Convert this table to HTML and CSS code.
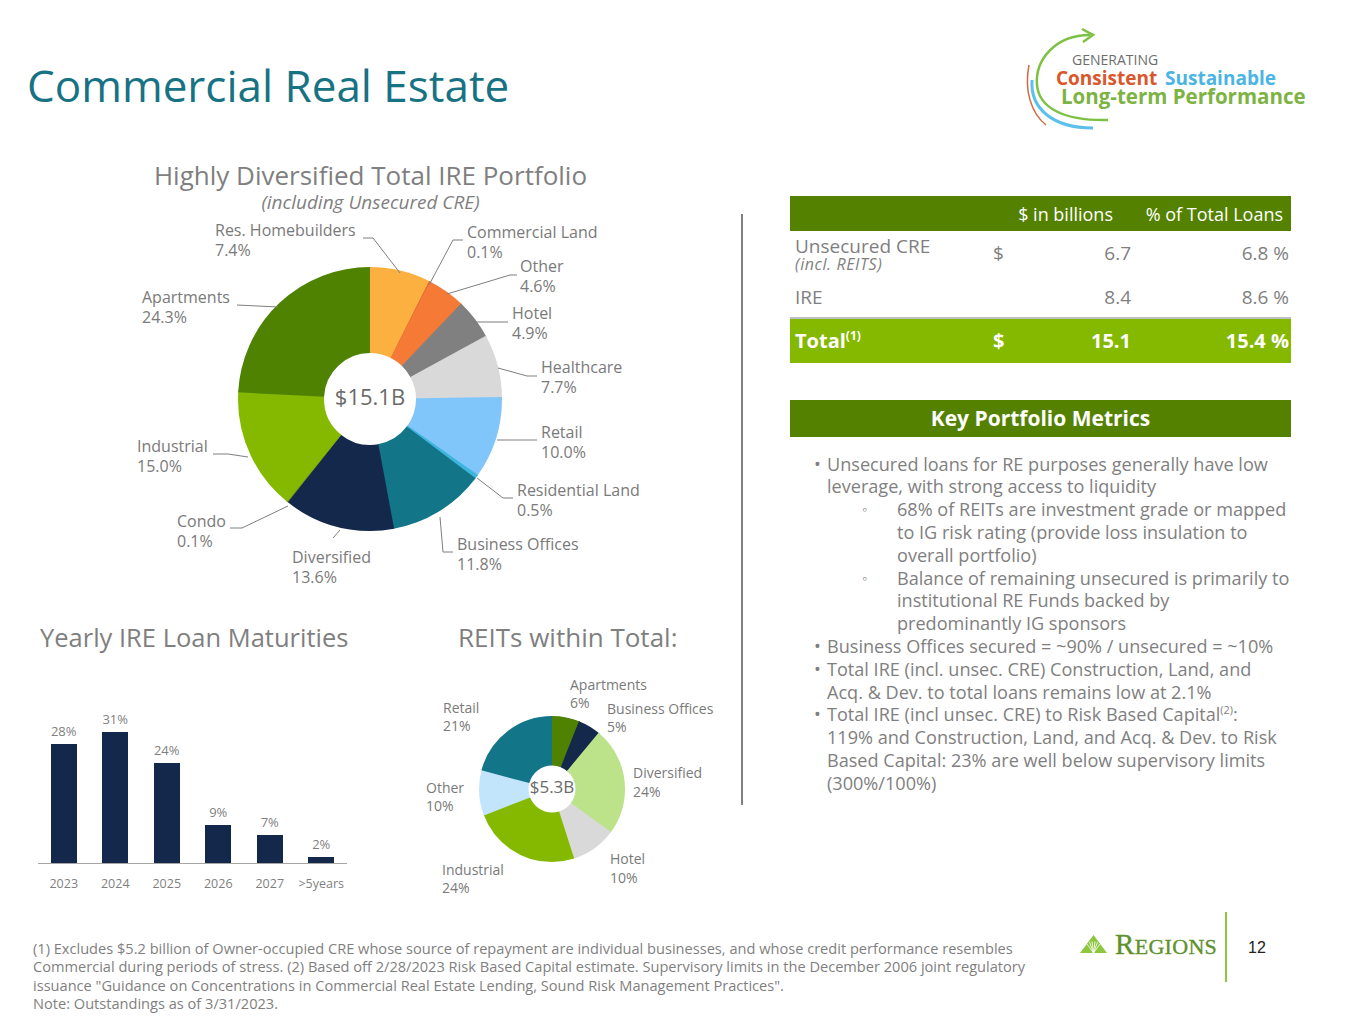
FILE: index.html
```html
<!DOCTYPE html>
<html lang="en">
<head>
<meta charset="utf-8">
<title>Commercial Real Estate</title>
<link rel="stylesheet" href="styles.css">
</head>
<body>
<div class="slide">
  <header class="top">
    <h1 class="title">Commercial Real Estate</h1>
    <svg class="brand" width="310" height="115" viewBox="1010 20 310 115">
      <path d="M1090,35 C1055,35 1035,60 1037,85 C1039,108 1064,121 1108,120" stroke="#7cc142" stroke-width="2.5" fill="none"/>
      <polyline points="1082,29 1093,35 1083,42" stroke="#7cc142" stroke-width="2.5" fill="none"/>
      <path d="M1029,65 C1024,90 1031,113 1046,125" stroke="#d2693f" stroke-width="1.5" fill="none"/>
      <path d="M1032,80 C1030,108 1052,128 1093,128" stroke="#5bc0eb" stroke-width="3" fill="none"/>
      <text class="b-gen" x="1072" y="65">GENERATING</text>
      <text class="b-big b-orange" x="1056" y="85">Consistent</text>
      <text class="b-big b-blue" x="1165" y="85">Sustainable</text>
      <text class="b-long b-green" x="1061" y="104">Long-term Performance</text>
    </svg>
  </header>

  <main class="main">
    <section class="leftcol">
      <div class="portfolio">
        <h2 class="chart-title">Highly Diversified Total IRE Portfolio</h2>
        <div class="chart-sub">(including Unsecured CRE)</div>
        <svg class="pie" width="741" height="386" viewBox="0 214 741 386">
          <g transform="rotate(-90 370 399)" fill="none" stroke-width="86">
            <circle cx="370" cy="399" r="89" stroke="#fbb040" stroke-dasharray="42.4 600" stroke-dashoffset="0"/>
            <circle cx="370" cy="399" r="89" stroke="#e2603a" stroke-dasharray="1.56 600" stroke-dashoffset="-41.38"/>
            <circle cx="370" cy="399" r="89" stroke="#f47a36" stroke-dasharray="26.7 600" stroke-dashoffset="-41.94"/>
            <circle cx="370" cy="399" r="89" stroke="#808080" stroke-dasharray="28.4 600" stroke-dashoffset="-67.66"/>
            <circle cx="370" cy="399" r="89" stroke="#d9d9d9" stroke-dasharray="44.1 600" stroke-dashoffset="-95.06"/>
            <circle cx="370" cy="399" r="89" stroke="#80c6fb" stroke-dasharray="56.9 600" stroke-dashoffset="-138.12"/>
            <circle cx="370" cy="399" r="89" stroke="#3fb4dd" stroke-dasharray="3.8 600" stroke-dashoffset="-194.04"/>
            <circle cx="370" cy="399" r="89" stroke="#127588" stroke-dasharray="67.0 600" stroke-dashoffset="-196.84"/>
            <circle cx="370" cy="399" r="89" stroke="#14284b" stroke-dasharray="77.1 600" stroke-dashoffset="-262.82"/>
            <circle cx="370" cy="399" r="89" stroke="#6a8c2a" stroke-dasharray="1.56 600" stroke-dashoffset="-338.88"/>
            <circle cx="370" cy="399" r="89" stroke="#85b900" stroke-dasharray="84.9 600" stroke-dashoffset="-339.43"/>
            <circle cx="370" cy="399" r="89" stroke="#4f8200" stroke-dasharray="135.89 600" stroke-dashoffset="-423.31"/>
          </g>
          <text class="pie-center" x="370" y="405">$15.1B</text>
          <g class="leaders" fill="none" stroke="#7f7f7f" stroke-width="1">
            <polyline points="363,238 373,238 400,273"/>
            <polyline points="463,240 453,240 429,285"/>
            <polyline points="517,275 510,275 447,294"/>
            <polyline points="508,322 473,322"/>
            <polyline points="537,376 527,376 498,368"/>
            <polyline points="537,440 497,440"/>
            <polyline points="513,498 503,498 477,478"/>
            <polyline points="453,552 443,552 440,517"/>
            <polyline points="333,538 340,530"/>
            <polyline points="230,528 242,528 288,506"/>
            <polyline points="213,454 228,454 248,457"/>
            <polyline points="237,305 278,307"/>
          </g>
          <g class="lbl">
            <text x="215" y="236">Res. Homebuilders</text><text x="215" y="256">7.4%</text>
            <text x="467" y="238">Commercial Land</text><text x="467" y="258">0.1%</text>
            <text x="520" y="272">Other</text><text x="520" y="292">4.6%</text>
            <text x="512" y="319">Hotel</text><text x="512" y="339">4.9%</text>
            <text x="541" y="373">Healthcare</text><text x="541" y="393">7.7%</text>
            <text x="541" y="438">Retail</text><text x="541" y="458">10.0%</text>
            <text x="517" y="496">Residential Land</text><text x="517" y="516">0.5%</text>
            <text x="457" y="550">Business Offices</text><text x="457" y="570">11.8%</text>
            <text x="292" y="563">Diversified</text><text x="292" y="583">13.6%</text>
            <text x="177" y="527">Condo</text><text x="177" y="547">0.1%</text>
            <text x="137" y="452">Industrial</text><text x="137" y="472">15.0%</text>
            <text x="142" y="303">Apartments</text><text x="142" y="323">24.3%</text>
          </g>
        </svg>
      </div>

      <div class="lower">
        <div class="maturities">
          <h2 class="sec-title">Yearly IRE Loan Maturities</h2>
          <div class="bars">
            <div class="bar-col"><span class="bar-val">28%</span><div class="bar" style="height:119px"></div></div>
            <div class="bar-col"><span class="bar-val">31%</span><div class="bar" style="height:131px"></div></div>
            <div class="bar-col"><span class="bar-val">24%</span><div class="bar" style="height:100px"></div></div>
            <div class="bar-col"><span class="bar-val">9%</span><div class="bar" style="height:38px"></div></div>
            <div class="bar-col"><span class="bar-val">7%</span><div class="bar" style="height:28px"></div></div>
            <div class="bar-col"><span class="bar-val">2%</span><div class="bar" style="height:6px"></div></div>
          </div>
          <div class="years">
            <span>2023</span><span>2024</span><span>2025</span><span>2026</span><span>2027</span><span>&gt;5years</span>
          </div>
        </div>

        <div class="reits">
          <h2 class="sec-title">REITs within Total:</h2>
          <svg class="reit-pie" width="341" height="253" viewBox="400 652 341 253">
            <g transform="rotate(-90 552 789)" fill="none" stroke-width="49.5">
              <circle cx="552" cy="789" r="48.25" stroke="#4f8200" stroke-dasharray="19 400" stroke-dashoffset="0"/>
              <circle cx="552" cy="789" r="48.25" stroke="#14284b" stroke-dasharray="15.96 400" stroke-dashoffset="-18.19"/>
              <circle cx="552" cy="789" r="48.25" stroke="#bce28a" stroke-dasharray="73.56 400" stroke-dashoffset="-33.35"/>
              <circle cx="552" cy="789" r="48.25" stroke="#d9d9d9" stroke-dasharray="31.12 400" stroke-dashoffset="-106.11"/>
              <circle cx="552" cy="789" r="48.25" stroke="#85b900" stroke-dasharray="73.56 400" stroke-dashoffset="-136.42"/>
              <circle cx="552" cy="789" r="48.25" stroke="#c3e5fb" stroke-dasharray="31.12 400" stroke-dashoffset="-209.18"/>
              <circle cx="552" cy="789" r="48.25" stroke="#127588" stroke-dasharray="63.66 400" stroke-dashoffset="-239.50"/>
            </g>
            <text class="reit-center" x="552" y="793">$5.3B</text>
            <g class="lbl-s">
              <text x="570" y="690">Apartments</text><text x="570" y="708">6%</text>
              <text x="607" y="714">Business Offices</text><text x="607" y="732">5%</text>
              <text x="443" y="713">Retail</text><text x="443" y="731">21%</text>
              <text x="633" y="778">Diversified</text><text x="633" y="797">24%</text>
              <text x="426" y="793">Other</text><text x="426" y="811">10%</text>
              <text x="610" y="864">Hotel</text><text x="610" y="883">10%</text>
              <text x="442" y="875">Industrial</text><text x="442" y="893">24%</text>
            </g>
          </svg>
        </div>
      </div>
    </section>

    <div class="divider"></div>

    <section class="rightcol">
      <div class="trow thead">
        <span class="h-b">$ in billions</span>
        <span class="h-p">% of Total Loans</span>
      </div>
      <div class="trow r1">
        <div class="lab"><div class="lab-main">Unsecured CRE</div><div class="lab-note">(incl. REITS)</div></div>
        <div class="cur">$</div>
        <div class="val">6.7</div>
        <div class="pct">6.8 %</div>
      </div>
      <div class="trow r2">
        <div class="lab">IRE</div>
        <div class="cur"></div>
        <div class="val">8.4</div>
        <div class="pct">8.6 %</div>
      </div>
      <div class="trow total">
        <div class="lab">Total<sup>(1)</sup></div>
        <div class="cur">$</div>
        <div class="val">15.1</div>
        <div class="pct">15.4 %</div>
      </div>

      <div class="kpm">Key Portfolio Metrics</div>

      <div class="bullets">
        <div class="bl"><span class="dot">•</span><p>Unsecured loans for RE purposes generally have low<br>leverage, with strong access to liquidity</p></div>
        <div class="bl sub"><span class="dot">◦</span><p>68% of REITs are investment grade or mapped<br>to IG risk rating (provide loss insulation to<br>overall portfolio)</p></div>
        <div class="bl sub"><span class="dot">◦</span><p>Balance of remaining unsecured is primarily to<br>institutional RE Funds backed by<br>predominantly IG sponsors</p></div>
        <div class="bl"><span class="dot">•</span><p>Business Offices secured = ~90% / unsecured = ~10%</p></div>
        <div class="bl"><span class="dot">•</span><p>Total IRE (incl. unsec. CRE) Construction, Land, and<br>Acq. &amp; Dev. to total loans remains low at 2.1%</p></div>
        <div class="bl"><span class="dot">•</span><p>Total IRE (incl unsec. CRE) to Risk Based Capital<sup>(2)</sup>:<br>119% and Construction, Land, and Acq. &amp; Dev. to Risk<br>Based Capital: 23% are well below supervisory limits<br>(300%/100%)</p></div>
      </div>
    </section>
  </main>

  <footer class="foot">
    <div class="note">(1) Excludes $5.2 billion of Owner-occupied CRE whose source of repayment are individual businesses, and whose credit performance resembles<br>Commercial during periods of stress. (2) Based off 2/28/2023 Risk Based Capital estimate. Supervisory limits in the December 2006 joint regulatory<br>issuance "Guidance on Concentrations in Commercial Real Estate Lending, Sound Risk Management Practices".<br>Note: Outstandings as of 3/31/2023.</div>
    <svg class="regions" width="140" height="40" viewBox="0 0 140 40">
      <polygon points="0,27 13.5,9 27,27" fill="#8dc63f"/>
      <g stroke="#ffffff" stroke-width="0.8">
        <line x1="13.5" y1="27" x2="7" y2="18"/>
        <line x1="13.5" y1="27" x2="9.5" y2="16"/>
        <line x1="13.5" y1="27" x2="12" y2="15.5"/>
        <line x1="13.5" y1="27" x2="15" y2="15.5"/>
        <line x1="13.5" y1="27" x2="17.5" y2="16"/>
        <line x1="13.5" y1="27" x2="20" y2="18"/>
      </g>
      <text class="reg-text" x="35" y="28"><tspan class="reg-cap">R</tspan><tspan class="reg-sc">EGIONS</tspan></text>
    </svg>
    <div class="vline"></div>
    <div class="pnum">12</div>
  </footer>
</div>
</body>
</html>
```

FILE: styles.css
```css
* { box-sizing: border-box; }
html, body { margin: 0; padding: 0; background: #ffffff; }
body { font-family: "Open Sans", "Noto Sans", sans-serif; color: #7f7f7f; }

.slide { width: 1365px; height: 1024px; overflow: hidden; display: flex; flex-direction: column; }

/* header */
.top { height: 150px; flex: none; display: flex; justify-content: space-between; align-items: flex-start; }
.title { margin: 63px 0 0 27px; font-size: 44px; line-height: 44px; font-weight: 400; color: #177383; white-space: nowrap; }
.brand { margin: 20px 45px 0 0; flex: none; display: block; }
.brand text { font-family: "Open Sans", sans-serif; }
.b-gen { font-size: 14px; fill: #6d6d6d; }
.b-big { font-size: 19px; font-weight: 700; }
.b-long { font-size: 20.5px; font-weight: 700; }
.b-orange { fill: #d9572b; }
.b-blue { fill: #4ab5e3; }
.b-green { fill: #7cb342; }

/* main */
.main { height: 755px; flex: none; display: flex; }
.leftcol { width: 741px; flex: none; display: flex; flex-direction: column; }

.portfolio { height: 460px; flex: none; padding-top: 10px; display: flex; flex-direction: column; align-items: center; }
.chart-title { margin: 0; font-size: 26px; line-height: 30px; font-weight: 400; color: #7f7f7f; white-space: nowrap; }
.chart-sub { font-size: 19px; line-height: 24px; font-style: italic; color: #7f7f7f; }
.pie { display: block; flex: none; }
.pie text, .reit-pie text { font-family: "Open Sans", sans-serif; }
.lbl text { font-size: 16px; fill: #7a7a7a; }
.pie-center { font-size: 22px; fill: #6a6a6a; text-anchor: middle; }

.lower { height: 295px; flex: none; display: flex; }
.sec-title { margin: 12px 0 0; font-size: 25.5px; line-height: 30px; font-weight: 400; color: #7f7f7f; white-space: nowrap; }

.maturities { width: 400px; flex: none; }
.maturities .sec-title { padding-left: 40px; }
.bars { margin-left: 38px; width: 309px; height: 211.5px; display: flex; align-items: flex-end; border-bottom: 1.5px solid #a6a6a6; }
.bar-col { width: 51.5px; flex: none; display: flex; flex-direction: column; align-items: center; }
.bar-val { font-size: 13px; line-height: 16px; margin-bottom: 5px; color: #7f7f7f; }
.bar { width: 26px; background: #14284b; }
.years { margin-left: 38px; width: 309px; display: flex; margin-top: 12px; }
.years span { width: 51.5px; flex: none; text-align: center; font-size: 12.5px; line-height: 16px; color: #7f7f7f; }

.reits { width: 341px; flex: none; }
.reits .sec-title { padding-left: 58px; font-size: 26px; }
.reit-pie { display: block; }
.lbl-s text { font-size: 14px; fill: #7a7a7a; }
.reit-center { font-size: 17px; fill: #6a6a6a; text-anchor: middle; }

.divider { width: 2px; height: 591px; margin-top: 64px; background: #808080; flex: none; }

/* right column */
.rightcol { width: 501px; margin-left: 47px; padding-top: 46px; flex: none; }
.trow { display: grid; grid-template-columns: 200px 30px 120px 151px; }
.thead { height: 35px; background: #548200; color: #ffffff; font-size: 18px; align-items: center; }
.h-b { grid-column: 2 / 4; text-align: right; padding-right: 27px; }
.h-p { text-align: right; padding-right: 8px; }
.r1, .r2 { font-size: 19px; line-height: 20px; color: #7f7f7f; }
.r1 { height: 50px; }
.r1 .lab { padding-top: 5px; }
.r1 .cur, .r1 .val, .r1 .pct { padding-top: 12px; }
.r2 { height: 38px; border-bottom: 2px solid #bfbfbf; }
.r2 > div { padding-top: 6px; }
.lab { padding-left: 5px; white-space: nowrap; }
.lab-note { font-size: 16px; line-height: 17px; font-style: italic; letter-spacing: 0.6px; }
.cur { padding-left: 3px; }
.val { text-align: right; padding-right: 9px; }
.pct { text-align: right; padding-right: 2px; }
.total { height: 44px; background: #84b900; color: #ffffff; font-weight: 700; font-size: 20px; line-height: 24px; align-items: center; }
.total sup, .bl sup { font-size: 0.6em; line-height: 0; vertical-align: super; }

.kpm { margin-top: 37px; height: 37px; background: #548200; color: #ffffff; font-weight: 700; font-size: 21px; line-height: 37px; text-align: center; }

.bullets { margin-top: 15.6px; font-size: 18.1px; line-height: 22.8px; color: #7f7f7f; }
.bl { display: flex; padding-left: 24px; }
.bl .dot { width: 13px; flex: none; }
.bl p { margin: 0; white-space: nowrap; }
.bl.sub { padding-left: 72px; }
.bl.sub .dot { width: 35px; font-size: 14px; }

/* footer */
.foot { height: 119px; flex: none; display: flex; align-items: flex-start; }
.note { width: 1047px; flex: none; padding: 34px 0 0 33px; font-size: 14.6px; line-height: 18.3px; color: #7f7f7f; white-space: nowrap; }
.regions { display: block; flex: none; margin: 21px 0 0 33px; }
.reg-text { font-family: "Liberation Serif", "Times New Roman", serif; fill: #5f912e; stroke: #5f912e; stroke-width: 0.35px; letter-spacing: 0.3px; }
.reg-cap { font-size: 29px; }
.reg-sc { font-size: 22px; }
.vline { width: 2px; height: 70px; background: #8dc63f; margin: 7px 0 0 5px; flex: none; }
.pnum { margin: 35px 0 0 21px; font-family: "Liberation Sans", Arial, sans-serif; font-size: 16px; line-height: 16px; color: #222222; }
```
